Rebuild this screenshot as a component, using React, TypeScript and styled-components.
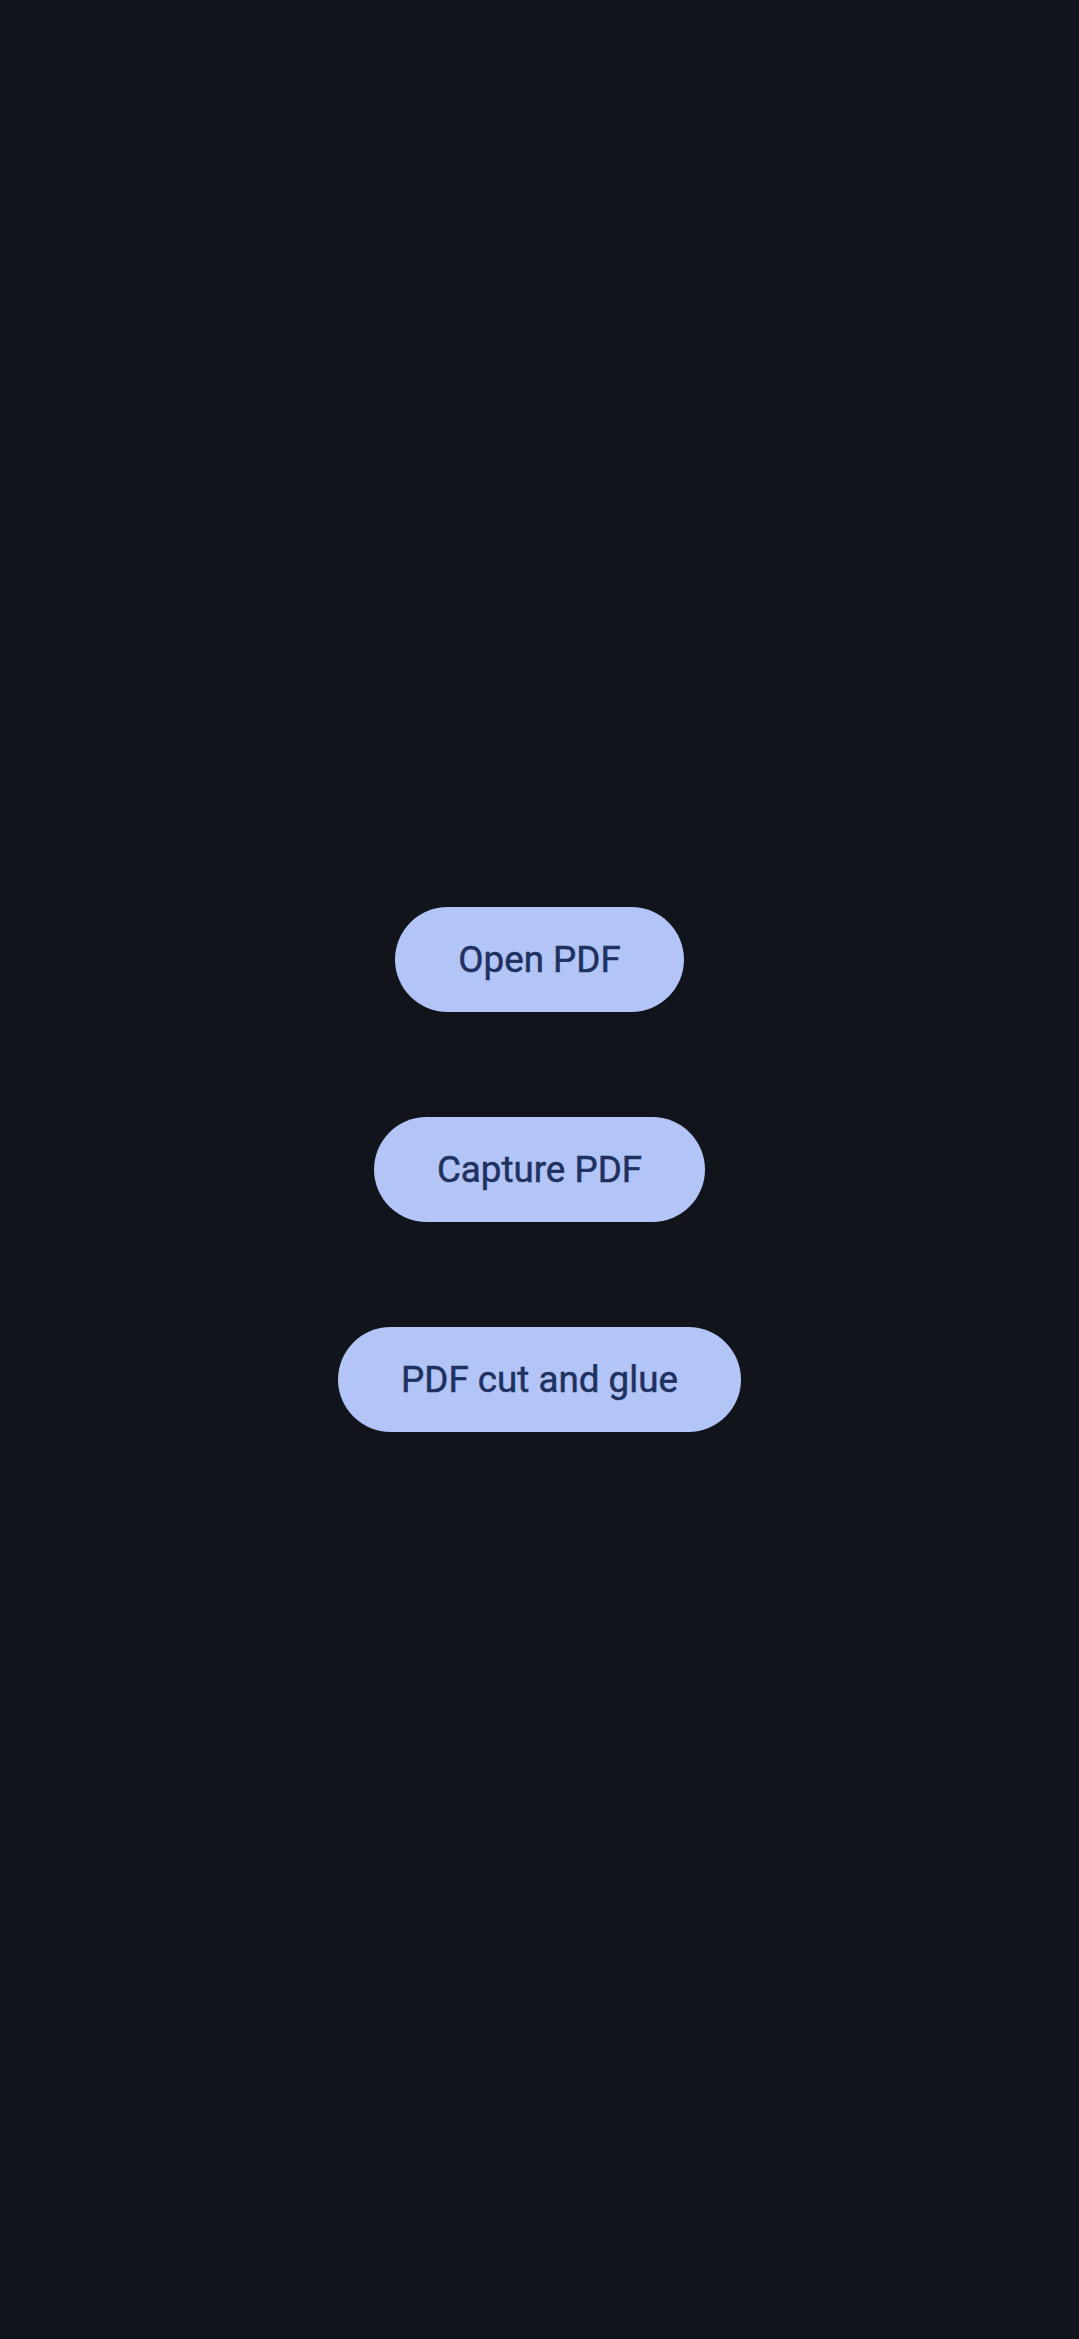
import styled, { createGlobalStyle } from "styled-components";

const GlobalStyle = createGlobalStyle`
  html, body {
    margin: 0;
    padding: 0;
    background: #11141b;
  }
  #root {
    min-height: 100vh;
  }
`;

const Screen = styled.main`
  min-height: 100vh;
  display: flex;
  flex-direction: column;
  align-items: center;
  justify-content: center;
  gap: 105px;
  background: #11141b;
`;

const PillButton = styled.button`
  height: 105px;
  padding: 0 63px;
  border: none;
  border-radius: 53px;
  background: #b3c5f7;
  color: #1e3160;
  font-family: Roboto, "Liberation Sans", sans-serif;
  font-size: 36.75px;
  font-weight: 400;
  letter-spacing: 0;
  -webkit-text-stroke: 0.5px #1e3160;
  cursor: pointer;
`;

const App = () => {
  return (
    <>
      <GlobalStyle />
      <Screen>
        <PillButton>Open PDF</PillButton>
        <PillButton>Capture PDF</PillButton>
        <PillButton>PDF cut and glue</PillButton>
      </Screen>
    </>
  );
};

export default App;
